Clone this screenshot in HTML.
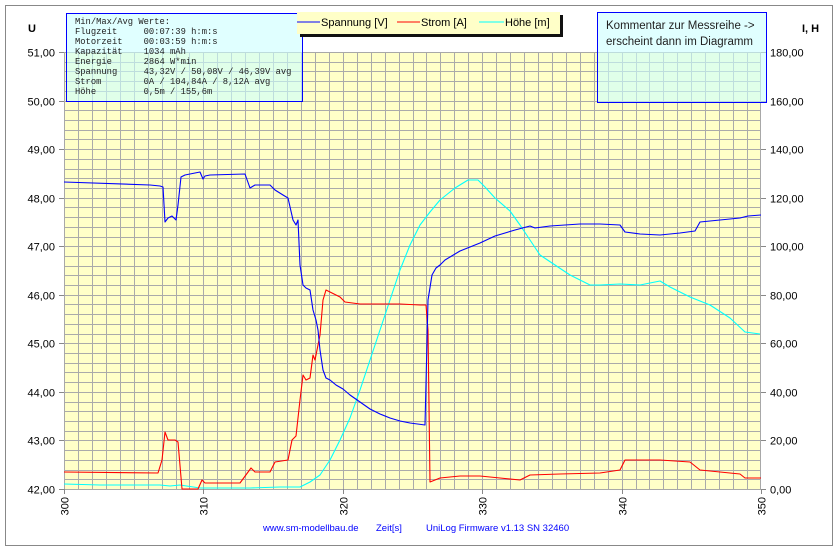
<!DOCTYPE html><html><head><meta charset="utf-8"><style>
body{margin:0;background:#fff;width:840px;height:554px;overflow:hidden}
svg{display:block}
text{font-family:"Liberation Sans",sans-serif}
text.mono{font-family:"Liberation Mono",monospace}
</style></head><body>
<svg width="840" height="554" viewBox="0 0 840 554">
<rect x="5.5" y="5.5" width="827" height="540" fill="#fff" stroke="#888" stroke-width="1"/>
<rect x="64" y="52" width="697" height="437" fill="#ffffc8"/>
<g id="grid" stroke="#aaaaaa" stroke-width="1"></g>
<rect x="64.5" y="52.5" width="696" height="437" fill="none" stroke="#a8a8a8"/>
<g fill="none" stroke-width="1.1" stroke-linejoin="round">
<polyline stroke="#00ffff" points="64,484 100,485 160,485 170,486 180,485 200,488 250,488 280,487 300,487 310,482 320,475 330,460 340,440 350,418 360,390 370,360 380,330 390,300 400,270 410,245 420,225 430,212 440,200 455,188 468,180 478,180 485,187 495,198 510,211 520,225 530,240 540,255 555,265 570,275 590,285 600,285 620,284 640,285 660,281 670,287 690,297 710,305 730,318 745,332 760,334"/>
<polyline stroke="#ff0000" points="64,472 158,473 162,460 165,432 168,440 175,440 178,442 182,489 198,489 202,480 205,483 240,483 251,468 255,472 270,472 275,462 288,460 292,440 296,436 300,400 303,375 306,380 310,378 313,355 315,360 318,345 320,335 323,300 326,290 330,292 340,297 345,302 360,304 380,304 400,304 420,305 426,305 428,330 430,482 435,480 440,478 460,476 480,476 500,478 520,480 530,475 560,474 600,473 620,470 625,460 660,460 690,462 700,470 740,474 745,478 761,478"/>
<polyline stroke="#0000ff" points="64,182 150,185 160,186 163,187 165,222 168,218 172,216 176,220 178,205 181,177 185,175 200,172 203,179 205,176 210,175 245,174 250,188 255,185 270,185 275,190 283,195 288,198 293,220 296,225 298,220 300,265 303,285 306,288 310,290 313,310 316,320 318,330 320,350 323,370 326,378 330,380 336,385 343,389 350,395 360,402 370,409 380,414 390,418 400,421 410,423 425,425 428,300 432,275 436,268 440,265 445,260 460,251 480,243 495,236 515,230 530,226 535,228 550,226 580,224 600,224 620,225 625,232 640,234 660,235 680,233 695,231 700,222 720,220 740,218 748,216 761,215"/>
</g>
<g id="ticks" stroke="#888"></g>
<g id="labels" font-size="11" fill="#000"></g>
<text x="28" y="32" font-size="11" font-weight="bold">U</text>
<text x="802" y="32" font-size="11" font-weight="bold">I, H</text>
<rect x="66.5" y="13.5" width="236" height="88" fill="rgba(204,255,255,0.6)" stroke="#0000ff"/>
<text class="mono" font-size="8.8" fill="#222" xml:space="preserve"><tspan x="75" y="24">Min/Max/Avg Werte:</tspan><tspan x="75" y="34">Flugzeit     00:07:39 h:m:s</tspan><tspan x="75" y="44">Motorzeit    00:03:59 h:m:s</tspan><tspan x="75" y="54">Kapazität    1034 mAh</tspan><tspan x="75" y="64">Energie      2864 W*min</tspan><tspan x="75" y="74">Spannung     43,32V / 50,08V / 46,39V avg</tspan><tspan x="75" y="84">Strom        0A / 104,84A / 8,12A avg</tspan><tspan x="75" y="94">Höhe         0,5m / 155,6m</tspan></text>
<rect x="300" y="15" width="263" height="22" fill="#111"/>
<rect x="297" y="12" width="263" height="22" fill="#ffffc8"/>
<line x1="297" y1="22" x2="320" y2="22" stroke="#0000ff"/>
<text x="321" y="26" font-size="11">Spannung [V]</text>
<line x1="397" y1="22" x2="420" y2="22" stroke="#ff0000"/>
<text x="421" y="26" font-size="11">Strom [A]</text>
<line x1="479" y1="22" x2="504" y2="22" stroke="#00ffff"/>
<text x="505" y="26" font-size="11">Höhe [m]</text>
<rect x="597.5" y="12.5" width="169" height="90" fill="rgba(204,255,255,0.6)" stroke="#0000ff"/>
<text x="606" y="29" font-size="11.5" fill="#222">Kommentar zur Messreihe -&gt;</text>
<text x="606" y="45" font-size="11.5" fill="#222">erscheint dann im Diagramm</text>
<text x="263" y="531" font-size="9.5" fill="#0000ff">www.sm-modellbau.de</text>
<text x="376" y="531" font-size="9.5" fill="#0000ff">Zeit[s]</text>
<text x="426" y="531" font-size="9.5" fill="#0000ff">UniLog Firmware v1.13 SN 32460</text>
</svg>
<script>
var ns="http://www.w3.org/2000/svg",g=document.getElementById("grid"),t=document.getElementById("ticks"),l=document.getElementById("labels");
function L(p,a,b,c,d){var e=document.createElementNS(ns,"line");e.setAttribute("x1",a);e.setAttribute("y1",b);e.setAttribute("x2",c);e.setAttribute("y2",d);p.appendChild(e);}
function T(x,y,s,anc,rot){var e=document.createElementNS(ns,"text");e.setAttribute("x",x);e.setAttribute("y",y);if(anc)e.setAttribute("text-anchor",anc);if(rot)e.setAttribute("transform",rot);e.textContent=s;l.appendChild(e);}
for(var i=1;i<50;i++){var x=Math.round(64+i*13.94)+0.5;L(g,x,52,x,489);}
for(var j=1;j<45;j++){var y=Math.round(489-j*9.711)+0.5;L(g,64,y,761,y);}
for(var k=0;k<=9;k++){var y=Math.round(489-k*48.56)+0.5;L(t,59,y,64,y);L(t,761,y,766,y);
T(55,y+4,(42+k)+",00","end");T(770,y+4,(k*20).toFixed(2).replace(".",","));}
for(var m=0;m<=5;m++){var x=Math.round(64+m*139.4)+0.5;L(t,x,489,x,494);T(x+4,497,String(300+m*10),"end","rotate(-90 "+(x+4)+" 497)");}
</script>
</body></html>
